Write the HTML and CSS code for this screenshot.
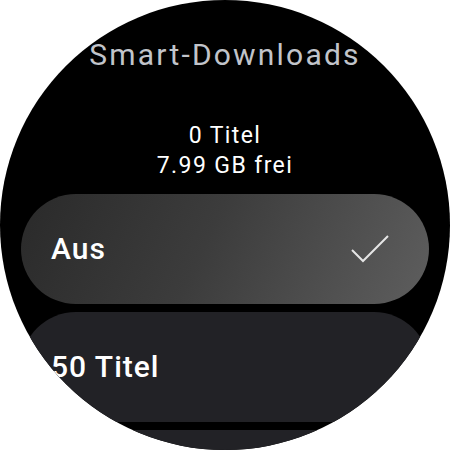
FILE: index.html
```html
<!DOCTYPE html>
<html lang="de">
<head>
<meta charset="utf-8">
<link rel="stylesheet" href="styles.css">
</head>
<body>
<div class="watch">
  <div class="title">Smart-Downloads</div>
  <div class="info">
    <div>0 Titel</div>
    <div>7.99 GB frei</div>
  </div>
  <div class="list">
    <div class="chip chip-selected">
      <span class="label">Aus</span>
      <svg class="check" width="38" height="30" viewBox="0 0 38 30">
        <path d="M1 16 L12 27 L37 2" fill="none" stroke="#e6e6e6" stroke-width="2"/>
      </svg>
    </div>
    <div class="chip">
      <span class="label">50 Titel</span>
    </div>
    <div class="chip"></div>
  </div>
</div>
</body>
</html>
```

FILE: styles.css
```css
html, body {
  margin: 0;
  padding: 0;
  background: #ffffff;
}
.watch {
  width: 450px;
  height: 450px;
  border-radius: 50%;
  background: #000000;
  overflow: hidden;
  display: flex;
  flex-direction: column;
  align-items: center;
  font-family: Roboto, "Noto Sans", sans-serif;
}
.title {
  margin-top: 37px;
  font-size: 30px;
  line-height: 36px;
  color: #c1c4ca;
  letter-spacing: 2.2px;
}
.info {
  margin-top: 48px;
  color: #ffffff;
  font-size: 23px;
  line-height: 30px;
  letter-spacing: 1.4px;
  text-align: center;
}
.list {
  margin-top: 13px;
  display: flex;
  flex-direction: column;
  gap: 8px;
}
.chip {
  width: 408px;
  height: 110px;
  flex: none;
  border-radius: 55px;
  background: #222226;
  box-sizing: border-box;
  padding: 0 40px 0 30px;
  display: flex;
  align-items: center;
  justify-content: space-between;
}
.chip-selected {
  background: linear-gradient(115deg, #2a2a2a 0%, #3c3c3c 45%, #5e5e5e 100%);
}
.label {
  color: #ffffff;
  font-size: 30px;
  font-weight: 500;
  line-height: 36px;
  letter-spacing: 1px;
}
.check {
  display: block;
}
```
